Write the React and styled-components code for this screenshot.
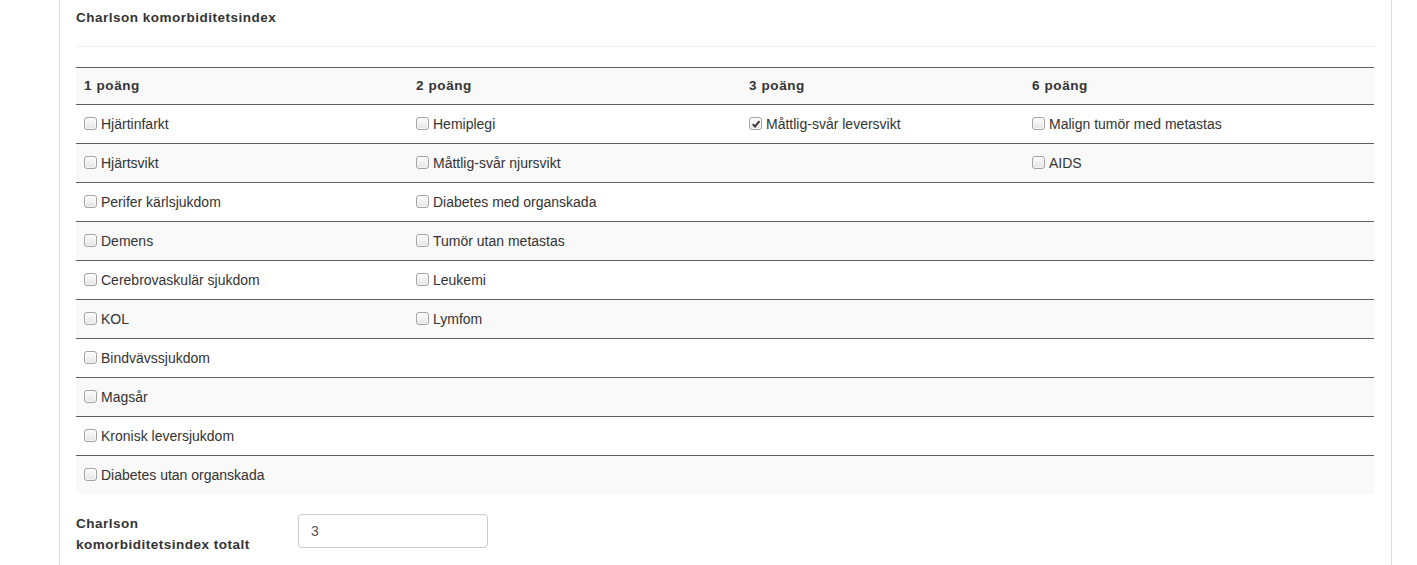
import React from "react";
import styled, { createGlobalStyle } from "styled-components";

const GlobalStyle = createGlobalStyle`
  html, body {
    margin: 0;
    padding: 0;
    background: #fff;
  }
  body {
    font-family: "Liberation Sans", Arial, sans-serif;
    font-size: 14px;
    color: #333;
  }
`;

const columns = [
  { title: "1 poäng", width: 332 },
  { title: "2 poäng", width: 333 },
  { title: "3 poäng", width: 283 },
  { title: "6 poäng", width: 350 },
];

const items = [
  ["Hjärtinfarkt", "Hemiplegi", "Måttlig-svår leversvikt", "Malign tumör med metastas"],
  ["Hjärtsvikt", "Måttlig-svår njursvikt", null, "AIDS"],
  ["Perifer kärlsjukdom", "Diabetes med organskada", null, null],
  ["Demens", "Tumör utan metastas", null, null],
  ["Cerebrovaskulär sjukdom", "Leukemi", null, null],
  ["KOL", "Lymfom", null, null],
  ["Bindvävssjukdom", null, null, null],
  ["Magsår", null, null, null],
  ["Kronisk leversjukdom", null, null, null],
  ["Diabetes utan organskada", null, null, null],
];

const checked = ["Måttlig-svår leversvikt"];

function Check({ label }) {
  const on = checked.includes(label);
  return (
    <CheckLabel>
      <Box>
        {on && (
          <svg width="10" height="10" viewBox="0 0 10 10">
            <path d="M1.8 5.2 L4 7.6 L8.4 2.2" fill="none" stroke="#333" strokeWidth="1.9" />
          </svg>
        )}
      </Box>
      {label}
    </CheckLabel>
  );
}

export default function App() {
  return (
    <>
      <GlobalStyle />
      <Panel>
        <Title>Charlson komorbiditetsindex</Title>
        <Divider />
        <Table>
          <colgroup>
            {columns.map((c) => (
              <col key={c.title} style={{ width: c.width }} />
            ))}
          </colgroup>
          <thead>
            <tr>
              {columns.map((c) => (
                <Th key={c.title}>{c.title}</Th>
              ))}
            </tr>
          </thead>
          <tbody>
            {items.map((row, i) => (
              <Row key={i} $striped={i % 2 === 1}>
                {row.map((label, j) => (
                  <Td key={j}>{label && <Check label={label} />}</Td>
                ))}
              </Row>
            ))}
          </tbody>
        </Table>
        <FormGroup>
          <FieldLabel>Charlson komorbiditetsindex totalt</FieldLabel>
          <Input defaultValue="3" readOnly />
        </FormGroup>
      </Panel>
    </>
  );
}

const Panel = styled.div`
  margin-left: 59px;
  width: 1299px;
  min-height: 565px;
  box-sizing: content-box;
  border-left: 1px solid #ddd;
  border-right: 1px solid #ddd;
  padding: 8px 16px 0 16px;
`;

const Title = styled.div`
  font-weight: bold;
  font-size: 13.5px;
  line-height: 20px;
  margin-bottom: 18px;
  color: #333;
  letter-spacing: 0.5px;
`;

const Divider = styled.div`
  height: 1px;
  background: #eee;
  margin-bottom: 20px;
`;

const Table = styled.table`
  width: 1298px;
  border-collapse: collapse;
  table-layout: fixed;
  border-top: 1px solid #5f5f5f;
`;

const Th = styled.th`
  text-align: left;
  font-weight: bold;
  font-size: 13.5px;
  letter-spacing: 0.6px;
  background: #f9f9f9;
  padding: 0 8px;
  height: 36px;
  line-height: 20px;
  border-bottom: 1px solid #5f5f5f;
`;

const Row = styled.tr`
  background: ${(p) => (p.$striped ? "#f9f9f9" : "#fff")};
`;

const Td = styled.td`
  padding: 0 8px;
  height: 38px;
  line-height: 20px;
  vertical-align: middle;
  border-top: 1px solid #5f5f5f;
`;

const CheckLabel = styled.label`
  display: inline-flex;
  align-items: center;
  white-space: nowrap;
  height: 20px;
`;

const Box = styled.span`
  display: inline-flex;
  align-items: center;
  justify-content: center;
  width: 11px;
  height: 11px;
  margin-right: 4px;
  margin-top: -1px;
  border: 1px solid #a3a3a3;
  border-radius: 3px;
  background: linear-gradient(#fdfdfd, #e4e4e4);
  box-shadow: inset 0 0 0 1px rgba(255, 255, 255, 0.6);
`;

const FormGroup = styled.div`
  display: flex;
  align-items: flex-start;
  margin-top: 19px;
`;

const FieldLabel = styled.div`
  width: 190px;
  margin-right: 32px;
  font-weight: bold;
  font-size: 13.5px;
  letter-spacing: 0.5px;
  line-height: 21px;
`;

const Input = styled.input`
  margin-top: 1px;
  width: 190px;
  height: 34px;
  box-sizing: border-box;
  padding: 6px 12px;
  border: 1px solid #ccc;
  border-radius: 4px;
  font-family: "Liberation Sans", Arial, sans-serif;
  font-size: 14px;
  color: #555;
  outline: none;
`;
